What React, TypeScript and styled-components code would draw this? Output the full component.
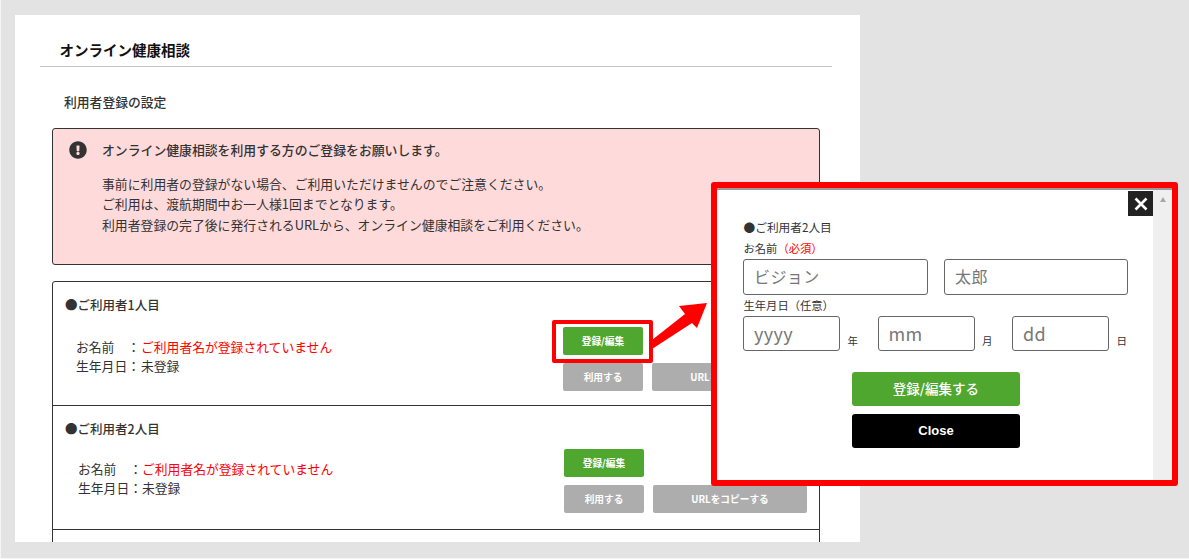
import styled, { createGlobalStyle } from 'styled-components';
import { FaExclamationCircle } from 'react-icons/fa';

const GlobalStyle = createGlobalStyle`
  html, body {
    margin: 0;
    padding: 0;
    background: #e3e3e3;
  }
  body {
    font-family: 'Noto Sans CJK JP', 'Noto Sans', sans-serif;
    color: #333;
  }
  * {
    box-sizing: border-box;
  }
`;

const Screen = styled.div`
  position: relative;
  width: 1189px;
  height: 559px;
  padding: 15px 0 0 15px;
  overflow: hidden;
  background: #e3e3e3;
  box-shadow: inset 1px 0 0 #f6f6f6, inset 0 -1px 0 #f6f6f6;
`;

const Panel = styled.main`
  width: 845px;
  height: 527px;
  padding: 26px 28px 0 25px;
  overflow: hidden;
  background: #fff;
`;

const PageTitle = styled.h1`
  margin: 0;
  height: 26px;
  padding: 0 0 0 19.5px;
  border-bottom: 1px solid #c4c4c4;
  font-size: 14.5px;
  line-height: 18px;
  font-weight: 700;
  color: #111;
`;

const SectionTitle = styled.h2`
  margin: 26px 0 17px 24px;
  font-size: 12.8px;
  line-height: 18px;
  font-weight: 500;
  color: #333;
`;

const Content = styled.div`
  width: 768px;
  margin-left: 12px;
`;

const Alert = styled.section`
  display: flex;
  gap: 15px;
  height: 137px;
  padding: 11px 15px;
  background: #ffdada;
  border: 1px solid #333;
  border-radius: 3px;
  svg {
    flex: none;
    width: 18px;
    height: 18px;
    margin: 1px 0 0 1px;
    color: #333;
  }
`;

const AlertBody = styled.div`
  font-size: 12.85px;
  line-height: 20.5px;
`;

const AlertHeading = styled.p`
  margin: 0 0 13px;
  font-weight: 500;
`;

const AlertLine = styled.p`
  margin: 0;
`;

const UserList = styled.div`
  margin-top: 16px;
  border: 1px solid #333;
  border-radius: 3px 3px 0 0;
`;

const UserRow = styled.article<{ $last?: boolean }>`
  height: ${(p) => (p.$last ? '40px' : '124px')};
  padding: 14px 12px 0;
  border-bottom: ${(p) => (p.$last ? 'none' : '1px solid #333')};
`;

const UserTitle = styled.h3`
  margin: 0;
  font-size: 12.5px;
  line-height: 18px;
  font-weight: 500;
`;

const UserBody = styled.div<{ $first?: boolean }>`
  display: flex;
  justify-content: space-between;
  margin-top: ${(p) => (p.$first ? '13px' : '11px')};
  padding-left: ${(p) => (p.$first ? '11px' : '13px')};
`;

const UserInfo = styled.dl`
  margin: 10px 0 0;
  font-size: 12.8px;
  line-height: 19.2px;
`;

const InfoLine = styled.div`
  display: flex;
`;

const InfoLabel = styled.dt<{ $first?: boolean }>`
  width: ${(p) => (p.$first ? '65px' : '64px')};
  white-space: pre;
`;

const InfoValue = styled.dd<{ $error?: boolean }>`
  margin: 0;
  color: ${(p) => (p.$error ? '#f00' : '#333')};
`;

const ActionGrid = styled.div<{ $first?: boolean }>`
  display: grid;
  grid-template-columns: 80px 154px;
  column-gap: 9px;
  row-gap: 8px;
  margin-right: ${(p) => (p.$first ? '1px' : '0')};
`;

const SmallButton = styled.button<{ $kind: 'green' | 'gray' }>`
  height: 28px;
  padding: 0;
  border: none;
  border-radius: 2px;
  background: ${(p) => (p.$kind === 'green' ? '#4fa72f' : '#adadad')};
  color: #fff;
  font-family: inherit;
  font-size: 9.7px;
  font-weight: 700;
`;

const Highlight = styled.div`
  position: absolute;
  left: 552px;
  top: 320px;
  width: 101px;
  height: 43px;
  border: 4px solid #f00;
  border-radius: 2px;
`;

const Arrow = styled.svg`
  position: absolute;
  left: 645px;
  top: 295px;
  width: 70px;
  height: 60px;
`;

const Modal = styled.aside`
  position: absolute;
  left: 711px;
  top: 182px;
  width: 467px;
  height: 304px;
  display: flex;
  border: 6px solid #f00;
  border-radius: 3px;
  background: #fff;
`;

const ModalBody = styled.div`
  position: relative;
  flex: 1;
  padding: 2px 0 0 26px;
  box-shadow: inset 0 2px 0 #999;
`;

const ModalClose = styled.button`
  position: absolute;
  top: 3px;
  right: 0;
  display: flex;
  align-items: center;
  justify-content: center;
  width: 25px;
  height: 25px;
  padding: 0;
  border: none;
  background: #222;
`;

const Scrollbar = styled.div`
  flex: none;
  width: 19px;
  display: flex;
  justify-content: center;
  padding-top: 9px;
  background: #efefef;
  box-shadow: inset 0 2px 0 #999;
`;

const ScrollArrow = styled.span`
  width: 0;
  height: 0;
  border-left: 3.5px solid transparent;
  border-right: 3.5px solid transparent;
  border-bottom: 5px solid #a8a8a8;
`;

const ModalTitle = styled.h4`
  margin: 28px 0 0 0.5px;
  font-size: 11.7px;
  line-height: 18px;
  font-weight: 400;
`;

const FieldLabel = styled.div<{ $gap: number }>`
  margin: ${(p) => p.$gap}px 0 0 0.5px;
  font-size: 11.3px;
  line-height: 15px;
`;

const Required = styled.span`
  color: #f00;
`;

const NameFields = styled.div`
  display: flex;
  gap: 16px;
  margin-top: 3px;
`;

const TextField = styled.input<{ $width: number; $height: number; $font: number }>`
  width: ${(p) => p.$width}px;
  height: ${(p) => p.$height}px;
  padding: 0 10px 2px;
  background: #fff;
  border: 1px solid #666;
  border-radius: 3px;
  font-family: inherit;
  font-size: ${(p) => p.$font}px;
  &::placeholder {
    color: #777;
    opacity: 1;
    letter-spacing: 0.4px;
  }
`;

const DateFields = styled.div`
  display: flex;
  margin-top: 3px;
`;

const DateField = styled.div`
  display: flex;
  align-items: flex-end;
  margin-right: 9.5px;
`;

const Unit = styled.span`
  width: 28px;
  padding: 0 0 3px 7.5px;
  font-size: 10.5px;
  line-height: 15px;
`;

const ModalActions = styled.div`
  display: flex;
  flex-direction: column;
  align-items: center;
  gap: 8px;
  width: 386px;
  margin-top: 21px;
`;

const ModalButton = styled.button<{ $kind: 'green' | 'black' }>`
  width: 168px;
  height: 34px;
  padding: 0 0 2px;
  border: none;
  border-radius: 3px;
  background: ${(p) => (p.$kind === 'green' ? '#4fa72f' : '#000')};
  color: #fff;
  font-family: ${(p) => (p.$kind === 'green' ? 'inherit' : "'Liberation Sans', sans-serif")};
  font-size: ${(p) => (p.$kind === 'green' ? '13.5px' : '13px')};
  font-weight: ${(p) => (p.$kind === 'green' ? 500 : 700)};
`;

const App = () => {
  const users = [
    { title: '●ご利用者1人目', first: true },
    { title: '●ご利用者2人目', first: false },
  ];

  return (
    <Screen>
      <GlobalStyle />
      <Panel>
        <PageTitle>オンライン健康相談</PageTitle>
        <SectionTitle>利用者登録の設定</SectionTitle>
        <Content>
          <Alert>
            <FaExclamationCircle />
            <AlertBody>
              <AlertHeading>オンライン健康相談を利用する方のご登録をお願いします。</AlertHeading>
              <AlertLine>事前に利用者の登録がない場合、ご利用いただけませんのでご注意ください。</AlertLine>
              <AlertLine>ご利用は、渡航期間中お一人様1回までとなります。</AlertLine>
              <AlertLine>利用者登録の完了後に発行されるURLから、オンライン健康相談をご利用ください。</AlertLine>
            </AlertBody>
          </Alert>
          <UserList>
            {users.map((user) => (
              <UserRow key={user.title}>
                <UserTitle>{user.title}</UserTitle>
                <UserBody $first={user.first}>
                  <UserInfo>
                    <InfoLine>
                      <InfoLabel $first={user.first}>お名前　：</InfoLabel>
                      <InfoValue $error>ご利用者名が登録されていません</InfoValue>
                    </InfoLine>
                    <InfoLine>
                      <InfoLabel $first={user.first}>生年月日：</InfoLabel>
                      <InfoValue>未登録</InfoValue>
                    </InfoLine>
                  </UserInfo>
                  <ActionGrid $first={user.first}>
                    <SmallButton $kind="green">登録/編集</SmallButton>
                    <span />
                    <SmallButton $kind="gray">利用する</SmallButton>
                    <SmallButton $kind="gray">URLをコピーする</SmallButton>
                  </ActionGrid>
                </UserBody>
              </UserRow>
            ))}
            <UserRow $last />
          </UserList>
        </Content>
      </Panel>

      <Highlight />
      <Arrow viewBox="0 0 70 60">
        <path d="M7 45 L40 19 L34 11 L62 8 L52 33 L47 28 L7 54 Z" fill="#f00" />
      </Arrow>

      <Modal>
        <ModalBody>
          <ModalClose aria-label="close">
            <svg width="14" height="14" viewBox="0 0 14 14">
              <path d="M1.5 1.5 L12.5 12.5 M12.5 1.5 L1.5 12.5" stroke="#fff" strokeWidth="2.6" />
            </svg>
          </ModalClose>
          <ModalTitle>●ご利用者2人目</ModalTitle>
          <FieldLabel $gap={5}>
            お名前<Required>（必須）</Required>
          </FieldLabel>
          <NameFields>
            <TextField $width={185} $height={36} $font={16} placeholder="ビジョン" />
            <TextField $width={184} $height={36} $font={16} placeholder="太郎" />
          </NameFields>
          <FieldLabel $gap={3}>生年月日（任意）</FieldLabel>
          <DateFields>
            <DateField>
              <TextField $width={97} $height={35} $font={18} placeholder="yyyy" />
              <Unit>年</Unit>
            </DateField>
            <DateField>
              <TextField $width={97} $height={35} $font={18} placeholder="mm" />
              <Unit>月</Unit>
            </DateField>
            <DateField>
              <TextField $width={97} $height={35} $font={18} placeholder="dd" />
              <Unit>日</Unit>
            </DateField>
          </DateFields>
          <ModalActions>
            <ModalButton $kind="green">登録/編集する</ModalButton>
            <ModalButton $kind="black">Close</ModalButton>
          </ModalActions>
        </ModalBody>
        <Scrollbar>
          <ScrollArrow />
        </Scrollbar>
      </Modal>
    </Screen>
  );
};

export default App;
